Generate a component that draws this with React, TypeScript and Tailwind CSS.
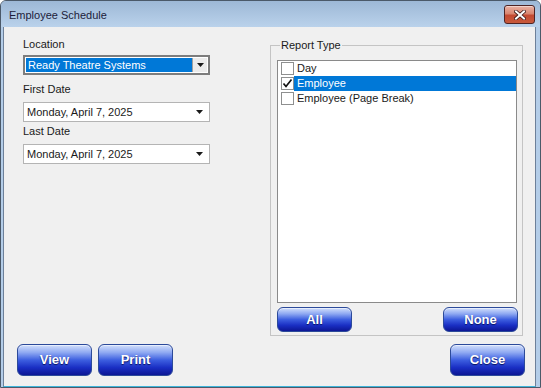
import type { ReactNode } from "react";

function BlueButton({ children, tall }: { children: ReactNode; tall?: boolean }) {
  return (
    <button
      type="button"
      className={`${tall ? "h-[32px]" : "h-[25px]"} w-[75px] rounded-[6px] border border-[#2c4a9a] bg-[linear-gradient(to_bottom,#d3e0fc_0%,#8fa9f2_25%,#3d5fe0_50%,#1a2fc4_75%,#0c1694_100%)] text-[13px] font-bold text-white [text-shadow:0_1px_1px_#061060] shadow-[inset_0_1px_0_rgba(255,255,255,0.5)] font-['Liberation_Sans',Arial,sans-serif]`}
    >
      {children}
    </button>
  );
}

function Arrow() {
  return (
    <svg width="7" height="4" viewBox="0 0 7 4" aria-hidden="true">
      <path d="M0 0 H7 L3.5 4 Z" fill="#1a1a1a" />
    </svg>
  );
}

function DateBox({ value }: { value: string }) {
  return (
    <div className="flex h-[20px] w-[187px] items-center justify-between border border-[#b4b4b4] bg-white pl-[3px] pr-[6px]">
      <span className="leading-[13px]">{value}</span>
      <Arrow />
    </div>
  );
}

function CheckItem({ label, checked, selected }: { label: string; checked?: boolean; selected?: boolean }) {
  return (
    <div className="flex h-[15px] items-center pl-[3px]">
      <div className="flex h-[13px] w-[13px] shrink-0 items-center justify-center border border-[#8e8f8f] bg-white">
        {checked && (
          <svg width="11" height="11" viewBox="0 0 11 11" aria-hidden="true">
            <path d="M1.5 5.5 L4 8.5 L9.5 1.5" fill="none" stroke="#111" strokeWidth="1.7" />
          </svg>
        )}
      </div>
      <span
        className={`flex h-[15px] flex-1 items-center pl-[3px] leading-[13px] ${selected ? "bg-[#0078d7] text-white" : "text-[#1a1a1a]"}`}
      >
        {label}
      </span>
    </div>
  );
}

export default function App() {
  return (
    <div className="flex h-[388px] w-[541px] flex-col overflow-hidden rounded-t-[6px] border border-[#4b5969] bg-[#b4cde8] text-[11px] text-[#1a1a1a] font-['Liberation_Sans',Arial,sans-serif]">
      {/* title bar */}
      <div className="flex h-[26px] shrink-0 items-start justify-between bg-[linear-gradient(to_bottom,#9db8d6,#bad2eb)] pl-[8px] pr-[5px]">
        <span className="mt-[8px] text-[11px] leading-[13px] text-[#1c1c3a]">Employee Schedule</span>
        <div className="mt-[4px] flex h-[19px] w-[31px] items-center justify-center rounded-[3px] border border-[#4e2424] bg-[linear-gradient(to_bottom,#eab2a4_0%,#d98670_45%,#c34a32_55%,#c85a3c_100%)] shadow-[inset_0_1px_0_rgba(255,255,255,0.45)]">
          <svg width="12" height="10" viewBox="0 0 12 10" aria-hidden="true">
            <path d="M2 1.5 L10 8.5 M10 1.5 L2 8.5" stroke="#3a1818" strokeWidth="3.6" strokeLinecap="square" />
            <path d="M2 1.5 L10 8.5 M10 1.5 L2 8.5" stroke="#ffffff" strokeWidth="2" strokeLinecap="square" />
          </svg>
        </div>
      </div>

      {/* client area */}
      <div className="ml-[2px] mr-[4px] flex flex-1 flex-col border-x border-b border-x-[#6d8099] border-b-[#3fb4da] bg-[#f0f0f0]">
        <div className="flex">
          {/* left column */}
          <div className="ml-[19px] flex w-[187px] flex-col pt-[11px]">
            <span className="leading-[13px]">Location</span>
            <div className="mt-[4px] flex h-[20px] w-[187px] border-2 border-[#7d7d7d] bg-white p-[1px]">
              <div className="flex flex-1 items-center bg-[#0078d7] pl-[2px] leading-[13px] text-white">
                Ready Theatre Systems
              </div>
              <div className="flex w-[15px] items-center justify-center border-l border-[#a0a0a0] bg-[#ececec]">
                <Arrow />
              </div>
            </div>
            <span className="mt-[8px] leading-[13px]">First Date</span>
            <div className="mt-[6px]">
              <DateBox value="Monday, April 7, 2025" />
            </div>
            <span className="mt-[3px] leading-[13px]">Last Date</span>
            <div className="mt-[6px]">
              <DateBox value="Monday, April 7, 2025" />
            </div>
          </div>

          {/* report type group */}
          <div className="relative ml-[60px] mt-[18px] flex h-[291px] w-[253px] flex-col border border-[#c4c4c4] pb-[3px] pl-[6px] pt-[14px]">
            <span className="absolute left-[9px] top-[-7px] bg-[#f0f0f0] px-[1px] leading-[13px]">Report Type</span>
            <div className="flex h-[243px] w-[240px] flex-col border border-[#8a8a8a] bg-white">
              <CheckItem label="Day" />
              <CheckItem label="Employee" checked selected />
              <CheckItem label="Employee (Page Break)" />
            </div>
            <div className="mt-[4px] flex w-[241px] justify-between">
              <BlueButton>All</BlueButton>
              <BlueButton>None</BlueButton>
            </div>
          </div>
        </div>

        {/* bottom buttons */}
        <div className="mt-[8px] flex pl-[13px] pr-[10px]">
          <BlueButton tall>View</BlueButton>
          <div className="ml-[6px]">
            <BlueButton tall>Print</BlueButton>
          </div>
          <div className="ml-auto">
            <BlueButton tall>Close</BlueButton>
          </div>
        </div>
      </div>
    </div>
  );
}
